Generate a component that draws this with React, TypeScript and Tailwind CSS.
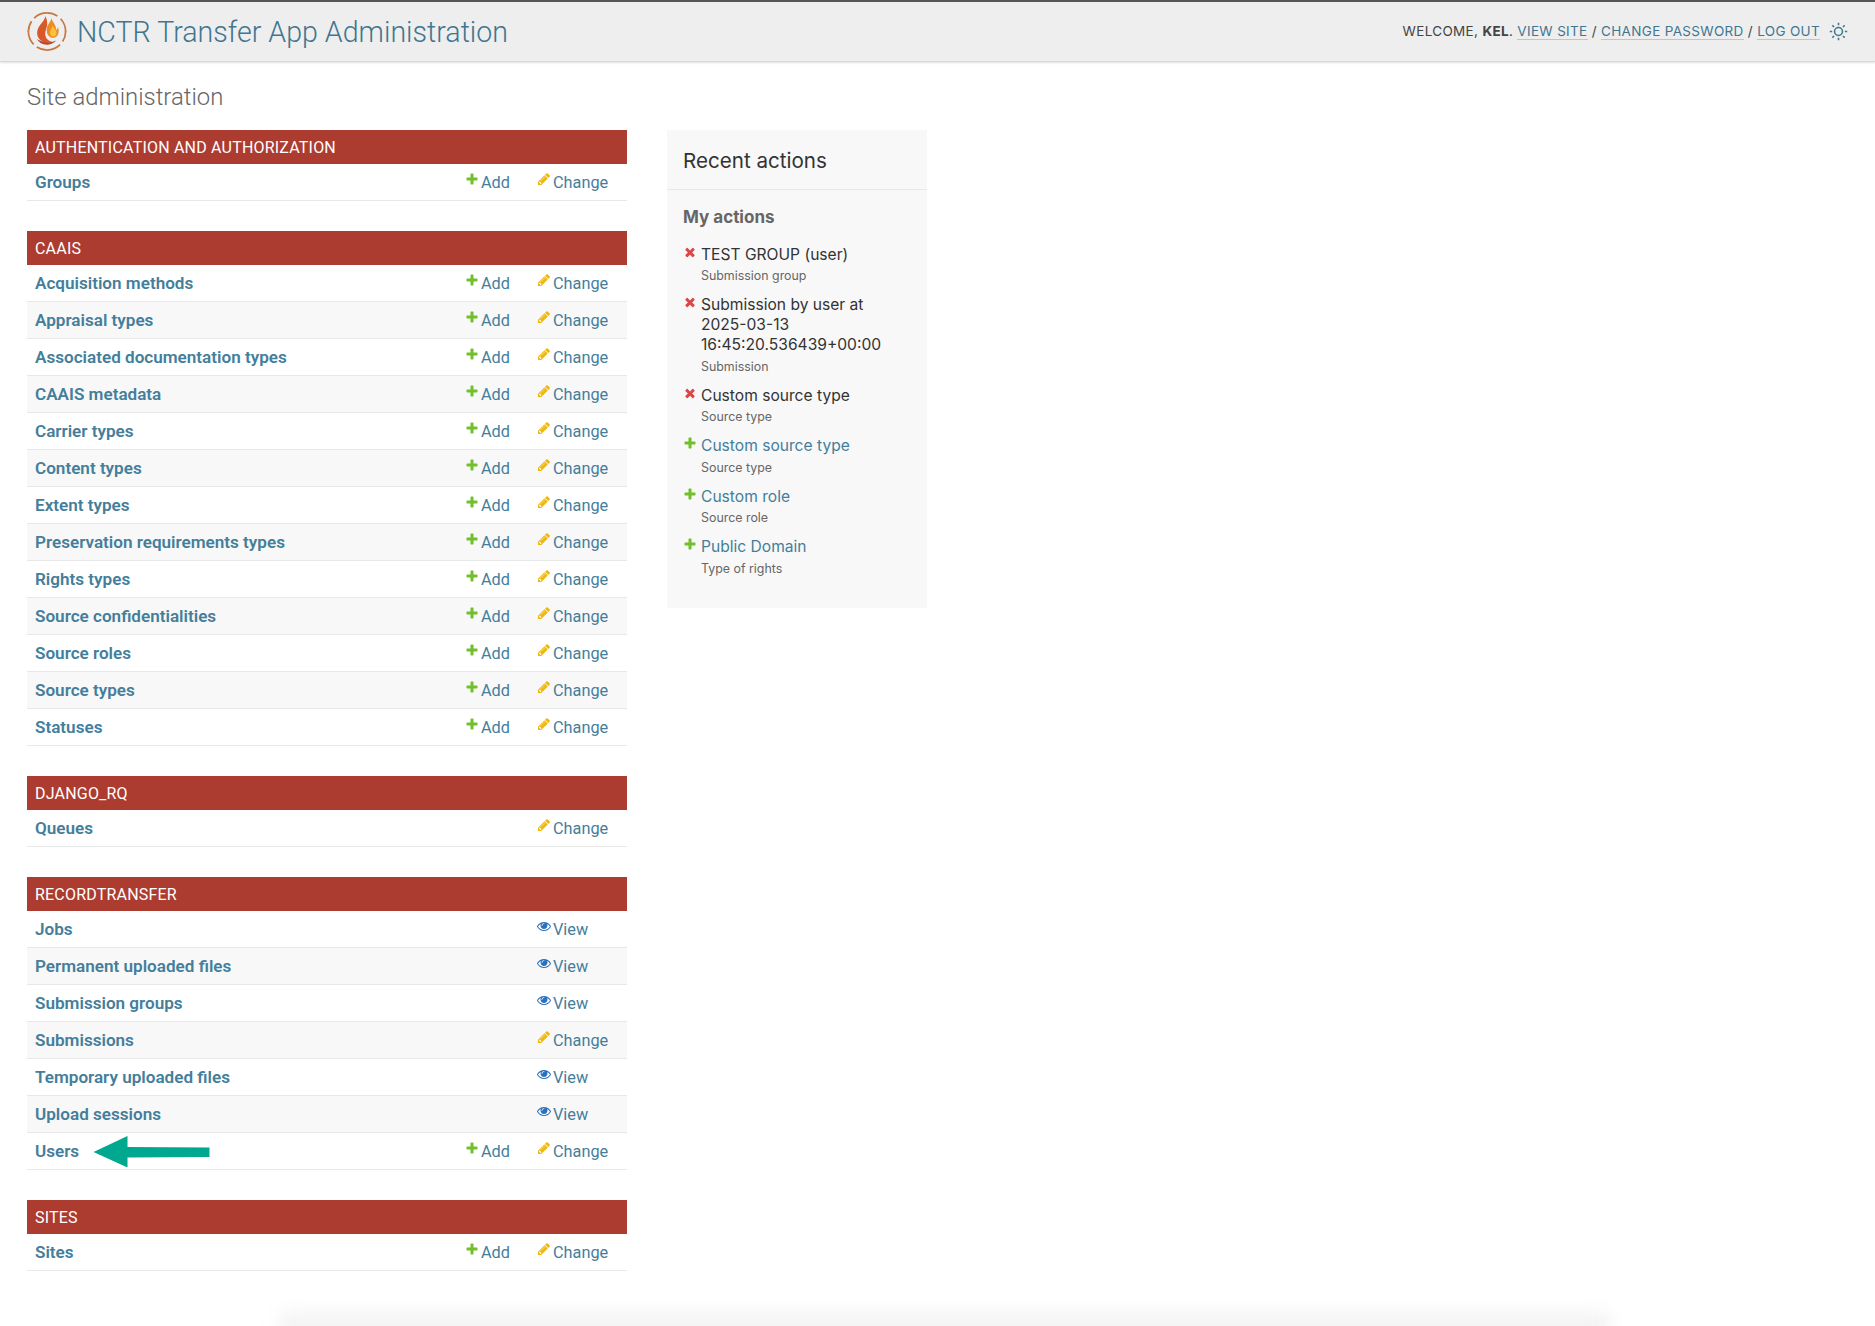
import React from "react";

const plus =
  "M1600 796v192q0 40-28 68t-68 28h-416v416q0 40-28 68t-68 28h-192q-40 0-68-28t-28-68v-416h-416q-40 0-68-28t-28-68v-192q0-40 28-68t68-28h416v-416q0-40 28-68t68-28h192q40 0 68 28t28 68v416h416q40 0 68 28t28 68z";
const pencil =
  "M491 1536l91-91-235-235-91 91v107h128v128h107zm523-928q0-22-22-22-10 0-17 7l-542 542q-7 7-7 17 0 22 22 22 10 0 17-7l542-542q7-7 7-17zm-54-192l416 416-832 832h-416v-416zm683 96q0 53-37 90l-166 166-416-416 166-165q36-38 90-38 53 0 91 38l235 234q37 39 37 91z";
const eye =
  "M1664 960q-152-236-381-353 61 104 61 225 0 185-131.5 316.5t-316.5 131.5-316.5-131.5-131.5-316.5q0-121 61-225-229 117-381 353 133 205 333.5 326.5t434.5 121.5 434.5-121.5 333.5-326.5zm-720-384q0-20-14-34t-34-14q-125 0-214.5 89.5t-89.5 214.5q0 20 14 34t34 14 34-14 14-34q0-86 61-147t147-61q20 0 34-14t14-34zm848 384q0 34-20 69-140 230-376.5 368.5t-499.5 138.5-499.5-139-376.5-368q-20-35-20-69t20-69q140-229 376.5-368t499.5-139 499.5 139 376.5 368q20 35 20 69z";
const cross =
  "M1490 1322q0 40-28 68l-136 136q-28 28-68 28t-68-28l-294-294-294 294q-28 28-68 28t-68-28l-136-136q-28-28-28-68t28-68l294-294-294-294q-28-28-28-68t28-68l136-136q28-28 68-28t68 28l294 294 294-294q28-28 68-28t68 28l136 136q28 28 28 68t-28 68l-294 294 294 294q28 28 28 68z";

const Icon = ({ d, color }: { d: string; color: string }) => (
  <svg viewBox="0 0 1792 1792" className="w-[14px] h-[14px] shrink-0" fill={color}>
    <path d={d} />
  </svg>
);

const Logo = () => (
  <svg viewBox="0 0 40 41" className="w-[40px] h-[41px] shrink-0">
    <circle cx="20" cy="20.5" r="18.6" fill="none" stroke="#c9773f" strokeWidth="1.7" strokeDasharray="25.2 4" strokeDashoffset="14.6" />
    <circle cx="20" cy="1.9" r="1" fill="#d98a4a" />
    <circle cx="38.6" cy="20.5" r="1" fill="#d98a4a" />
    <circle cx="20" cy="39.1" r="1" fill="#d98a4a" />
    <circle cx="1.4" cy="20.5" r="1" fill="#d98a4a" />
    <path d="M18 5c.5 4-4 7-6.500 11.500C9 21.500 10 27 14.500 30c3 2 8 2.500 12 1-3.500-.5-7-2-8-6-1-4 1-7 1.500-10.500.5-3.500 0-6.500-2-9.500z" fill="#d9582a" />
    <path d="M24 7c.5 3.500-3 5.500-4 9.500-1 4 0 7.500 3 9.500 2.500 1.500 5.500 1 7.500-1.500 1.500-2.500 1.500-5.500.5-8.500-.5 1.500-1 2.500-2 3 .5-4.500-3-7.500-5-12z" fill="#ef8a24" />
    <path d="M25.500 14.500c0 2.500-2.500 4.500-2.500 7s1.500 4 3.500 4 3.500-2 3-4.500c-.5-2.500-3-4-4-6.500z" fill="#f8c23a" />
    <path d="M10 28c2 4 7 6.500 12 5.500 3-.5 5.500-2 7-4-3.500 2-8 2.500-11.500 1.500-3-.8-5.500-1.500-7.500-3z" fill="#b9482a" />
  </svg>
);

type Model = { name: string; add?: boolean; change?: boolean; view?: boolean };

const caais = [
  "Acquisition methods",
  "Appraisal types",
  "Associated documentation types",
  "CAAIS metadata",
  "Carrier types",
  "Content types",
  "Extent types",
  "Preservation requirements types",
  "Rights types",
  "Source confidentialities",
  "Source roles",
  "Source types",
  "Statuses",
];

const modules: { title: string; models: Model[] }[] = [
  { title: "AUTHENTICATION AND AUTHORIZATION", models: [{ name: "Groups", add: true, change: true }] },
  { title: "CAAIS", models: caais.map((name) => ({ name, add: true, change: true })) },
  { title: "DJANGO_RQ", models: [{ name: "Queues", change: true }] },
  {
    title: "RECORDTRANSFER",
    models: [
      { name: "Jobs", view: true },
      { name: "Permanent uploaded files", view: true },
      { name: "Submission groups", view: true },
      { name: "Submissions", change: true },
      { name: "Temporary uploaded files", view: true },
      { name: "Upload sessions", view: true },
      { name: "Users", add: true, change: true },
    ],
  },
  { title: "SITES", models: [{ name: "Sites", add: true, change: true }] },
];

const actions = [
  { kind: "del", title: ["TEST GROUP (user)"], type: "Submission group" },
  { kind: "del", title: ["Submission by user at", "2025-03-13", "16:45:20.536439+00:00"], type: "Submission" },
  { kind: "del", title: ["Custom source type"], type: "Source type" },
  { kind: "add", title: ["Custom source type"], type: "Source type" },
  { kind: "add", title: ["Custom role"], type: "Source role" },
  { kind: "add", title: ["Public Domain"], type: "Type of rights" },
];

const Row = ({ model, even }: { model: Model; even: boolean }) => (
  <div
    className={`relative flex items-center h-[37px] pl-[8px] pt-[1px] border-b border-[#e8e8e8] text-[#447e9b] ${
      even ? "bg-[#f8f8f8]" : "bg-white"
    }`}
  >
    <span className="flex-1 font-semibold text-[17.100px]">{model.name}</span>
    <span className="w-[72px] flex items-center text-[16.300px] pt-[2px]">
      {model.add && (
        <>
          <span className="-mt-[9px] mr-[2px]">
            <Icon d={plus} color="#70bf2b" />
          </span>
          Add
        </>
      )}
    </span>
    <span className="w-[90px] flex items-center text-[16.300px] pt-[2px]">
      {model.change && (
        <>
          <span className="-mt-[9px] mr-[2px]">
            <Icon d={pencil} color="#efb80b" />
          </span>
          Change
        </>
      )}
      {model.view && (
        <>
          <span className="-mt-[9px] mr-[2px]">
            <Icon d={eye} color="#2b70bf" />
          </span>
          View
        </>
      )}
    </span>
    {model.name === "Users" && (
      <svg viewBox="0 0 116 31" className="absolute left-[66px] top-[3px] w-[117px] h-[31px]">
        <path d="M0 16 34 0v11l82 .5v9.500l-82 .5v10z" fill="#00a88f" />
      </svg>
    )}
  </div>
);

export default function App() {
  return (
    <div className="relative h-[1326px] overflow-hidden bg-white font-['Roboto',sans-serif] text-[16px]">
      <header className="h-[62px] bg-[#eeeeee] border-t-2 border-[#555555] border-b border-b-[#d8d8d8] shadow-[0_1px_2px_rgba(0,0,0,0.12)] flex items-center justify-between pl-[27px] pr-[27px]">
        <div className="flex items-center gap-[10px]">
          <Logo />
          <span className="text-[#417690] text-[28.600px] font-light pt-[1px]">NCTR Transfer App Administration</span>
        </div>
        <div className="flex items-center gap-[9px] font-['Inter',sans-serif] text-[13.500px] tracking-[0.33px] text-[#444444]">
          <div className="mb-[1px]">
            WELCOME, <strong className="font-bold">KEL</strong>.{" "}
            <a className="text-[#417690] border-b border-[#c4c4c4]">VIEW SITE</a> /{" "}
            <a className="text-[#417690] border-b border-[#c4c4c4]">CHANGE PASSWORD</a> /{" "}
            <a className="text-[#417690] border-b border-[#c4c4c4]">LOG OUT</a>
          </div>
          <svg viewBox="0 0 24 24" className="w-[19px] h-[19px]" fill="#417690">
            <path d="M12 18a6 6 0 1 1 0-12 6 6 0 0 1 0 12zm0-2a4 4 0 1 0 0-8 4 4 0 0 0 0 8zM11 1h2v3h-2V1zm0 19h2v3h-2v-3zM3.515 4.929l1.414-1.414L7.05 5.636 5.636 7.05 3.515 4.93zM16.95 18.364l1.414-1.414 2.121 2.121-1.414 1.414-2.121-2.121zm2.121-14.85l1.414 1.415-2.121 2.121-1.414-1.414 2.121-2.121zM5.636 16.95l1.414 1.414-2.121 2.121-1.414-1.414 2.121-2.121zM23 11v2h-3v-2h3zM4 11v2H1v-2h3z" />
          </svg>
        </div>
      </header>

      <main className="pl-[27px]">
        <h1 className="text-[23.900px] font-light text-[#666666] h-[68px] leading-[70px]">Site administration</h1>
        <div className="flex items-start gap-[40px]">
          <div className="w-[600px] flex flex-col gap-[30px]">
            {modules.map((mod) => (
              <section key={mod.title}>
                <div className="h-[34px] flex items-center pl-[8px] pt-[2px] bg-[#ad3c30] text-white text-[16px] tracking-[0.2px]">
                  {mod.title}
                </div>
                {mod.models.map((model, i) => (
                  <Row key={model.name} model={model} even={i % 2 === 1} />
                ))}
              </section>
            ))}
          </div>

          <aside className="w-[260px] h-[478px] bg-[#f8f8f8] font-['Inter',sans-serif]">
            <h2 className="h-[60px] border-b border-[#e8e8e8] pl-[16px] flex items-center text-[20.600px] text-[#333333] pt-[3px]">
              Recent actions
            </h2>
            <div className="pl-[16px] pr-[16px]">
              <h3 className="mt-[16px] mb-[16.500px] text-[17px] leading-[22px] font-bold text-[#666666]">My actions</h3>
              <ul className="flex flex-col gap-[10px]">
                {actions.map((a, i) => (
                  <li key={i} className="flex gap-[4px]">
                    <Icon d={a.kind === "del" ? cross : plus} color={a.kind === "del" ? "#dd4646" : "#70bf2b"} />
                    <div>
                      <div className={`text-[15.600px] leading-[20px] ${a.kind === "del" ? "text-[#333333]" : "text-[#447e9b]"}`}>
                        {a.title.map((line) => (
                          <div key={line}>{line}</div>
                        ))}
                      </div>
                      <div className="mt-[2.500px] text-[12.400px] leading-[18px] text-[#666666]">{a.type}</div>
                    </div>
                  </li>
                ))}
              </ul>
            </div>
          </aside>
        </div>
      </main>

      <div className="absolute left-[280px] -bottom-[8px] w-[1330px] h-[30px] bg-gradient-to-b from-white to-[#ececec] blur-[8px]" />
    </div>
  );
}
